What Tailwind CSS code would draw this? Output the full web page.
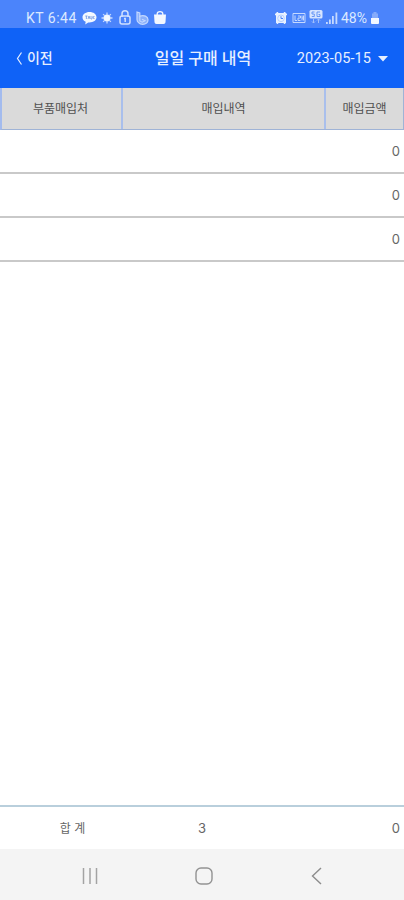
<!DOCTYPE html>
<html lang="ko">
<head>
  <meta charset="UTF-8" />
  <meta name="viewport" content="width=device-width, initial-scale=1.0"/>
  <title>일일 구매 내역</title>
  <script src="https://cdn.jsdelivr.net/npm/@tailwindcss/browser@4"></script>
</head>
<body class="flex flex-col h-screen overflow-hidden bg-white text-[#666666] font-[Roboto,'Noto_Sans_CJK_KR',sans-serif]">

  <!-- Status Bar -->
  <div class="h-7 shrink-0 bg-[#4b84fb] text-[#dce9ff] flex items-center justify-between pl-[26px] pr-[25px] pt-[7px]">
    <div class="flex items-center">
      <span class="w-14 text-[14px] leading-5 tracking-[0.5px] whitespace-nowrap">KT 6:44</span>
      <svg class="w-[15px] h-[14px]" viewBox="0 0 15 14">
        <path d="M7.500 1C3.500 1 .5 3.300 .5 6.300c0 2 1.200 3.600 3.200 4.500L3.200 13.500l3-2.100c5 .4 8.300-2 8.300-5.100S11.500 1 7.500 1z" fill="#f3f8ff"/>
        <path d="M3.300 5h2.200M4.400 5v3M6 8l1-3 1 3M9 5v3h1M11 5v3M12.500 5L11 6.500l1.500 1.500" fill="none" stroke="#6c94df" stroke-width=".8"/>
      </svg>
      <svg class="w-3 h-3 ml-1" viewBox="0 0 12 12">
        <circle cx="6" cy="6" r="3.500" fill="#f3f8ff"/>
        <path d="M6 .5v11M.5 6h11M2.100 2.100l7.800 7.800M9.900 2.100L2.100 9.900" stroke="#c3d8ff" stroke-width="1.300"/>
        <circle cx="6" cy="6" r="3" fill="#f3f8ff"/>
      </svg>
      <svg class="w-3 h-[15px] ml-[6px]" viewBox="0 0 12 15" fill="none" stroke="#cfe0ff" stroke-width="1.500">
        <path d="M3 7V3.800a3 3 0 0 1 6 0V7"/>
        <rect x="1" y="6" width="10" height="8" rx="2"/>
        <path d="M5 8.500h1.200V12"/>
      </svg>
      <svg class="w-[13px] h-[14px] ml-[5px]" viewBox="0 0 13 14" fill="#8bb0fb" stroke="#c3d8ff" stroke-width="1.200">
        <path d="M1 1l2.800 1v3.200C8 3.500 12 5.500 12 8.800c0 5.200-7 5.400-9.500 2.800C1.300 10.500 1 9.800 1 8.500z"/>
        <path d="M3.800 5v5l2.400 1.200L9 9.800 6 8.200" fill="none"/>
      </svg>
      <svg class="w-[14px] h-[15px] ml-1" viewBox="0 0 14 15">
        <path d="M4.200 5V3.800c0-3 5.600-3 5.600 0V5" fill="none" stroke="#f3f8ff" stroke-width="1.300"/>
        <path d="M1 4.500h12l-.5 7.500c-.1 1.300-.8 2-2 2h-7c-1.200 0-1.900-.7-2-2z" fill="#f3f8ff"/>
      </svg>
    </div>
    <div class="flex items-center">
      <svg class="w-3 h-3" viewBox="0 0 12 12">
        <path d="M1 1h10v10H1z" fill="#e8f1ff"/>
        <path d="M0 3l3-3M12 3L9 0M2 12l1.500-2M10 12l-1.500-2" stroke="#e8f1ff" stroke-width="1.300"/>
        <circle cx="6" cy="6.300" r="3.300" fill="none" stroke="#a9c6fd" stroke-width=".8"/>
        <path d="M6 4.200v2.300h2" fill="none" stroke="#4b84fb" stroke-width="1"/>
      </svg>
      <svg class="w-[14px] h-3 ml-[5px]" viewBox="0 0 14 12" fill="none" stroke="#c5d9ff" stroke-width="1">
        <path d="M1 1.500h12M1 10.500h12M1 1.500v9M13 1.500v9"/>
        <path d="M3 3.500v5h2M6 4h2.500v2H6v2.500h2.500M10 3.500v5M10 6h1.500M11.500 3.500v5"/>
      </svg>
      <svg class="w-[14px] h-[15px] ml-[3px] -mt-[3px]" viewBox="0 0 14 15">
        <rect x=".5" y="1" width="13" height="8.500" rx="1.500" fill="#d6e4ff"/>
        <path d="M5.500 3H3v2h2.300v2.500H2.800M11 3H8v4.500h3V5.500H9.500" fill="none" stroke="#5c8ef3" stroke-width=".9"/>
        <path d="M4.500 14v-4M3 12.500L4.500 14 6 12.500M9.500 10v4M8 11.500L9.500 10l1.500 1.500" fill="none" stroke="#9fbffc" stroke-width="1"/>
      </svg>
      <svg class="w-3 h-3 ml-[3px]" viewBox="0 0 12 12" fill="#c5d9ff">
        <path d="M0 10h1.800v2H0zM3 7.500h1.800V12H3zM6 4h1.800v8H6zM9.500 .5h1.800V12H9.500z"/>
      </svg>
      <span class="text-[14px] leading-5 ml-[3px] w-[30px] whitespace-nowrap">48%</span>
      <svg class="w-2 h-3" viewBox="0 0 8 12">
        <path d="M2.500 0h3v1.500h1.500V6H1V1.500h1.500z" fill="#85abfb"/>
        <path d="M0 6h8v5a1 1 0 0 1-1 1H1a1 1 0 0 1-1-1z" fill="#f3f8ff"/>
      </svg>
    </div>
  </div>

  <!-- Header -->
  <header class="h-15 shrink-0 bg-[#0f62f7] text-[#e6efff] grid grid-cols-[122px_1fr_122px] items-center pt-px">
    <button class="flex items-center pl-4 text-[14px] font-medium tracking-[-0.2px]">
      <svg class="w-[7px] h-[13px] mr-1" viewBox="0 0 7 13" fill="none" stroke="currentColor" stroke-width="1.200">
        <path d="M5.500 .5L1.500 6.500l4 6"/>
      </svg>
      이전
    </button>
    <h1 class="text-center text-[16px] font-medium pl-0.5 pt-px whitespace-nowrap">일일 구매 내역</h1>
    <button class="flex items-center justify-end pr-4 text-[14.5px] tracking-[0.1px] whitespace-nowrap">
      2023-05-15
      <svg class="w-[10px] h-[6px] ml-[7px]" viewBox="0 0 10 6" fill="currentColor">
        <path d="M0 0h10L5 5.500z"/>
      </svg>
    </button>
  </header>

  <!-- Table Header -->
  <div class="h-[42px] shrink-0 grid grid-cols-[121px_203px_1fr] text-[12px] text-[#505050] bg-[#dadada] border-b border-[#9fb3d6] border-l-2 border-l-[#a3bbee] border-r">
    <div class="flex items-center justify-center border-r-2 border-[#a9bfec] pt-px pr-0.5">부품매입처</div>
    <div class="flex items-center justify-center border-r-2 border-[#a9bfec] pt-px">매입내역</div>
    <div class="flex items-center justify-center pt-px">매입금액</div>
  </div>

  <!-- Rows -->
  <main class="flex-1 font-[Inter,sans-serif] text-[13px]">
    <div class="h-11 flex items-center justify-end pr-1 pt-0.5 border-b-2 border-[#c9c9c9]">0</div>
    <div class="h-11 flex items-center justify-end pr-1 pt-0.5 border-b-2 border-[#c9c9c9]">0</div>
    <div class="h-11 flex items-center justify-end pr-1 pt-0.5 border-b-2 border-[#c9c9c9]">0</div>
  </main>

  <!-- Total -->
  <footer class="h-11 shrink-0 border-t-2 border-[#b9cfdc] grid grid-cols-[145px_114px_1fr] items-center pt-0.5 font-[Inter,'Noto_Sans_CJK_KR',sans-serif] text-[13px]">
    <div class="text-center text-[12px]">합 계</div>
    <div class="text-center">3</div>
    <div class="text-right pr-1">0</div>
  </footer>

  <!-- Navigation Bar -->
  <nav class="h-[51px] shrink-0 bg-[#f4f4f4] flex items-center justify-between pl-[81px] pr-[78px] pt-[3px]">
    <svg class="w-[18px] h-[18px]" viewBox="0 0 18 18" stroke="#a3a3a3" stroke-width="1.500">
      <path d="M2.500 1v16M9 1v16M15.500 1v16"/>
    </svg>
    <svg class="w-[18px] h-[18px]" viewBox="0 0 18 18" fill="none" stroke="#929292" stroke-width="1.400">
      <rect x="1" y="1" width="16" height="16" rx="5"/>
    </svg>
    <svg class="w-[18px] h-[18px]" viewBox="0 0 18 18" fill="none" stroke="#8c8c8c" stroke-width="1.400">
      <path d="M13 1L4.500 9l8.500 8"/>
    </svg>
  </nav>

</body>
</html>
